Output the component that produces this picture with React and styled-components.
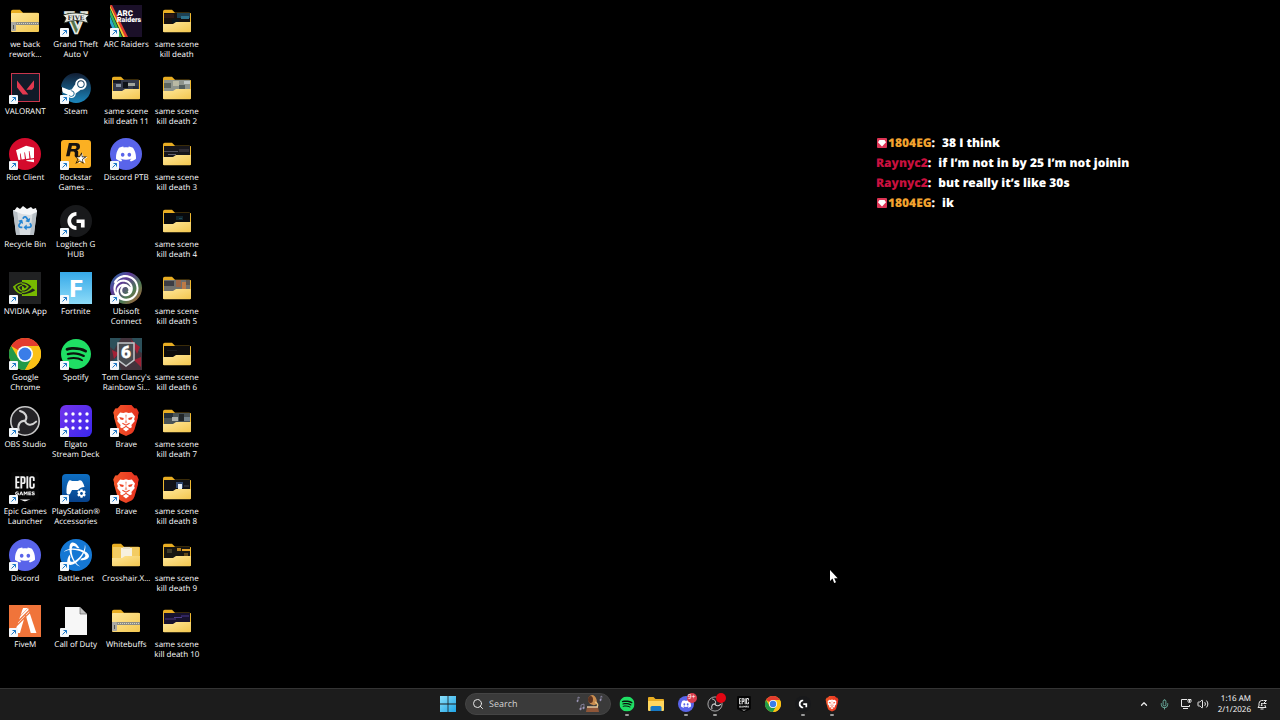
import React from "react";
import styled, { createGlobalStyle } from "styled-components";
import {
  SiValorant, SiSteam, SiRiotgames, SiRockstargames, SiDiscord, SiLogitechg, SiNvidia,
  SiUbisoft, SiSpotify, SiEpicgames, SiBattledotnet, SiFivem,
} from "react-icons/si";
import { FaRecycle, FaCog } from "react-icons/fa";
import { ChevronUp, Mic, Volume2, Search } from "lucide-react";

const GlobalStyle = createGlobalStyle`
  *, *::before, *::after { box-sizing: border-box; }
  body {
    margin: 0;
    background: #000;
    color: #fff;
    font-family: "Open Sans", "Noto Sans", sans-serif;
    text-rendering: geometricPrecision;
  }
  button, input { font: inherit; color: inherit; border: 0; padding: 0; background: none; text-rendering: inherit; }
`;

const Screen = styled.div`
  min-height: 100vh;
  display: flex;
  flex-direction: column;
`;

const Desktop = styled.main`
  position: relative;
  flex: 1;
  display: flex;
  align-items: stretch;
  justify-content: space-between;
  padding-bottom: 21px;
`;

const IconGrid = styled.ul`
  list-style: none;
  margin: 0;
  padding: 0;
  width: 202px;
  display: grid;
  grid-auto-flow: column;
  grid-template-columns: repeat(4, 1fr);
  grid-template-rows: repeat(10, 1fr);
`;

const Cell = styled.li`
  display: flex;
  justify-content: center;
  align-items: flex-start;
  min-width: 0;
`;

const Shortcut = styled.button`
  display: flex;
  flex-direction: column;
  align-items: center;
  gap: 3px;
  padding-top: 5px;
`;

const Glyph = styled.span`
  position: relative;
  display: block;
  width: 32px;
  height: 32px;
  svg { display: block; }
`;

const ArrowBadge = styled.svg`
  position: absolute;
  left: 0;
  bottom: 0;
`;

const Label = styled.span`
  font-size: 8px;
  line-height: 10px;
  text-align: center;
  white-space: pre;
`;

const Chat = styled.section`
  width: 404px;
  padding-top: 133px;
  font-family: "Open Sans", sans-serif;
  font-weight: 800;
  font-size: 12px;
  line-height: 20px;
`;

const Message = styled.p`
  margin: 0;
  display: flex;
  align-items: center;
  white-space: pre;
`;

const Author = styled.span`
  color: ${(p) => p.$color};
`;

const Body = styled.span`
  margin-left: 7px;
`;

const Pointer = styled.svg`
  position: absolute;
  left: 829px;
  top: 570px;
`;

const Taskbar = styled.footer`
  display: grid;
  grid-template-columns: 1fr auto 1fr;
  align-items: center;
  height: 32px;
  background: #1c1c1c;
  box-shadow: inset 0 1px #343434;
`;

const Center = styled.div`
  grid-column: 2;
  display: flex;
  align-items: center;
`;

const SearchBox = styled.label`
  display: flex;
  align-items: center;
  gap: 5px;
  width: 146px;
  height: 22px;
  margin: 0 8px 0 9px;
  padding: 0 6px;
  border-radius: 11px;
  background: #3a3a3a;
  border: 1px solid #444;
`;

const SearchInput = styled.input`
  flex: 1;
  min-width: 0;
  font-size: 9px;
  line-height: 12px;
  outline: none;
  &::placeholder { color: #d4d4d4; opacity: 1; }
`;

const Apps = styled.nav`
  display: flex;
  justify-content: space-between;
  width: 221px;
`;

const AppButton = styled.button`
  position: relative;
  width: 16px;
  height: 24px;
  display: flex;
  align-items: center;
  justify-content: center;
  svg { display: block; flex: none; }
  &::after {
    content: "";
    position: absolute;
    bottom: 0;
    left: 6px;
    width: 4px;
    height: 2px;
    border-radius: 1px;
    background: ${(p) => (p.$running ? "#9a9a9a" : "transparent")};
  }
`;

const Badge = styled.span`
  position: absolute;
  top: 1px;
  right: -3px;
  width: 10px;
  height: 10px;
  border-radius: 5px;
  background: ${(p) => p.$color};
  font-size: 7px;
  line-height: 10px;
  text-align: center;
`;

const Tray = styled.div`
  display: flex;
  align-items: center;
  justify-content: flex-end;
  padding-right: 13px;
`;

const TrayButton = styled.button`
  display: flex;
  margin-right: ${(p) => p.$gap || 0}px;
  color: ${(p) => p.$color || "#e8e8e8"};
`;

const Clock = styled.time`
  font-size: 8px;
  line-height: 11px;
  text-align: right;
  margin-right: 6px;
`;

const Art = ({ size = 32, children }) => (
  <svg width={size} height={size} viewBox="0 0 32 32" aria-hidden="true">{children}</svg>
);

const FOLDER_TAB = "M2 6.500q0-1.800 1.800-1.800H11l3 3h14.400q1.600 0 1.600 1.600V14H2z";

const Folder = ({ thumb, zip, size }) => (
  <Art size={size}>
    <defs>
      <linearGradient id="folderFront" x1="0" y1="0" x2="1" y2="1">
        <stop offset="0" stopColor="#ffe79a" />
        <stop offset="1" stopColor="#f3c74f" />
      </linearGradient>
    </defs>
    <path d={FOLDER_TAB} fill="#e8ad22" />
    <rect x="2" y="8" width="28" height="19" rx="1" fill={zip || !thumb ? "url(#folderFront)" : "#eeb932"} />
    {thumb && (
      <svg x="3" y="8" width="26" height="12" viewBox="0 0 26 12">
        {thumb.map(([x, y, w, h, c], i) => <rect key={i} x={x} y={y} width={w} height={h} fill={c} />)}
      </svg>
    )}
    {!zip && <path d="M2 19h10l3-2h15v9q0 1.200-1.200 1.200H3.200Q2 27.200 2 26z" fill="url(#folderFront)" />}
    {zip && (
      <g>
        <path d="M2 18.500h28" stroke="#8d8d86" strokeWidth="3" />
        <path d="M2 18.500h28" stroke="#d8d4bf" strokeWidth="1" strokeDasharray="1 1" />
        <rect x="2" y="17" width="5" height="9" rx="1" fill="#aaa9a3" />
        <path d="M4.500 20v4" stroke="#55554f" />
      </g>
    )}
  </Art>
);

const Spotify = ({ size }) => (
  <Art size={size}>
    <circle cx="16" cy="16" r="14" fill="#0b130d" />
    <SiSpotify x="1" y="1" size={30} color="#1fdf64" />
  </Art>
);

const Discord = ({ size }) => (
  <Art size={size}>
    <circle cx="16" cy="16" r="16" fill="#5964ea" />
    <SiDiscord x="6" y="6" size={20} color="#fff" />
  </Art>
);

const Chrome = ({ size }) => (
  <Art size={size}>
    <circle cx="16" cy="16" r="16" fill="#fbc116" />
    <path d="M16 16L2.140 8A16 16 0 0 1 29.860 8H16z" fill="#e33b2e" />
    <path d="M2.140 8A16 16 0 0 0 16 32l6.900-12L16 16l-6.900 4z" fill="#229a48" />
    <path d="M16 8h13.860A16 16 0 0 1 16 32l6.900-12z" fill="#fbc116" />
    <circle cx="16" cy="16" r="8" fill="#fff" />
    <circle cx="16" cy="16" r="6.400" fill="#3a7de8" />
  </Art>
);

const Obs = ({ size }) => (
  <Art size={size}>
    <circle cx="16" cy="16" r="14.200" fill="#242326" stroke="#c9c9c9" strokeWidth="1.600" />
    {[0, 120, 240].map((a) => (
      <path
        key={a}
        transform={`rotate(${a} 16 16)`}
        d="M16 16C19 12.500 17 7.500 11 6"
        fill="none"
        stroke="#d4d4d4"
        strokeWidth="2"
        strokeLinecap="round"
      />
    ))}
  </Art>
);

const Epic = ({ size }) => (
  <Art size={size}>
    <rect x="6" y="4" width="20" height="24" fill="#f4f4f4" />
    <path d="M9 27h14l-7 3z" fill="#f4f4f4" />
    <SiEpicgames x="0" y="0" size={32} color="#050505" />
  </Art>
);

const LogitechG = ({ size }) => (
  <Art size={size}>
    <circle cx="16" cy="16" r="16" fill="#18191b" />
    <SiLogitechg x="7" y="7" size={18} color="#fff" />
  </Art>
);

const Brave = ({ size }) => (
  <Art size={size}>
    <defs>
      <linearGradient id="braveShield" x1="0" y1="0" x2="1" y2="0">
        <stop offset="0" stopColor="#f4582a" />
        <stop offset="1" stopColor="#e5301f" />
      </linearGradient>
    </defs>
    <path d="M10.500 0h11l2.800 3.200 2.500.3 2 4-.8 3v2l-3.500 12q-.8 2.500-3 4L16 31l-5.500-2.500q-2.200-1.500-3-4L4 12.500v-2l-.8-3 2-4 2.500-.3z" fill="url(#braveShield)" />
    <g transform="translate(1.600 1.600) scale(.9)">
      <path d="M9.500 6.500l3.500.7 3-1 3 1 3.500-.7 3.500 4.500-1 3 .8 2-3.800 4.500.5 2.500-2 1-2-1-2.500-1.800L13.500 23l-2 1-2-1 .5-2.500L6.200 16l.8-2-1-3z" fill="#fff" />
      <path d="M12.500 25L16 22.800l3.500 2.200-3.500 2.600z" fill="#fff" />
      <path d="M8.500 11.500l5 1.300-.6 2.200-3-.7zM23.500 11.500l-5 1.300.6 2.200 3-.7z" fill="#ee4425" />
      <path d="M15 9h2l-.8 5 1.300 3.500-1.500 1.300-1.500-1.300 1.300-3.500z" fill="#f7a48f" />
      <path d="M12 18.500l4 2.200 4-2.200" fill="none" stroke="#ee4425" strokeWidth="1.200" />
    </g>
  </Art>
);

const Gta = () => (
  <Art>
    <text x="16" y="28" textAnchor="middle" fontFamily="Liberation Serif, serif" fontWeight="700" fontSize="32" fill="#55764b" stroke="#e6e8e2" strokeWidth="1.600">V</text>
    <path d="M3 10l3 3-2 5q12-5 24 0l-2-5 3-3q-13-4-26 0z" fill="#e9ebe5" stroke="#20281d" strokeWidth=".8" />
    <text x="16" y="15" textAnchor="middle" fontFamily="Liberation Serif, serif" fontWeight="700" fontSize="7" fill="#222">FIVE</text>
  </Art>
);

const Arc = () => (
  <Art>
    <rect width="32" height="32" fill="#1b1029" />
    <path d="M0 3l13 29h3L0 0z" fill="#f2d22e" />
    <path d="M0 0h2l16 32h-3z" fill="#e43b32" />
    <path d="M0 4l12 28h-3L0 10z" fill="#30b75c" />
    <path d="M0 11l9 21H6L0 18z" fill="#28a9c9" />
    <g fill="#fff" fontFamily="Roboto, sans-serif" fontWeight="900">
      <text x="7" y="11" fontSize="8">ARC</text>
      <text x="7" y="17" fontSize="7">Raiders</text>
    </g>
  </Art>
);

const Valorant = () => (
  <Art>
    <rect x="2.500" y="1.500" width="28" height="28" fill="#111a28" stroke="#c9364c" />
    <SiValorant x="8" y="7" size={17} color="#e3394f" />
  </Art>
);

const Steam = () => (
  <Art>
    <defs>
      <linearGradient id="steamBlue" x1="0" y1="0" x2="0" y2="1">
        <stop offset="0" stopColor="#111d33" />
        <stop offset="1" stopColor="#1b87bd" />
      </linearGradient>
    </defs>
    <circle cx="16" cy="16" r="14" fill="#fff" />
    <SiSteam x="1" y="1" size={30} fill="url(#steamBlue)" />
  </Art>
);

const Riot = () => (
  <Art>
    <circle cx="16" cy="16" r="16" fill="#d40a2c" />
    <SiRiotgames x="7" y="7" size={18} color="#fff" />
  </Art>
);

const Rockstar = () => (
  <Art>
    <rect x="1" y="2" width="30" height="28" rx="3" fill="#fbb022" />
    <path d="M22 15l1.500 3.800 4 .2-3.200 2.500 1.200 4-3.500-2.300-3.500 2.300 1.200-4-3.200-2.500 4-.2z" fill="#fff" />
    <SiRockstargames x="6" y="5" size={21} color="#151210" />
  </Art>
);

const RecycleBin = () => (
  <Art>
    <path d="M4 5h24l-3 24q0 1-1 1H8q-1 0-1-1z" fill="#d9dee2" />
    <path d="M4 5h4l3 25H8q-1 0-1-1zM24 5h4l-3 24q0 1-1 1h-3z" fill="#b8c0c6" />
    <path d="M5 6l3-4 3 2 3-3 4 3 4-2 2 2 3-1 1 4-7 3-8-1z" fill="#f5f6f7" />
    <FaRecycle x="9" y="11" size={14} color="#2585d3" />
  </Art>
);

const Nvidia = () => (
  <Art>
    <rect width="32" height="32" fill="#202122" />
    <SiNvidia x="4" y="4" size={24} color="#77b900" />
  </Art>
);

const Fortnite = () => (
  <Art>
    <defs>
      <linearGradient id="fortniteSky" x1="0" y1="0" x2="0" y2="1">
        <stop offset="0" stopColor="#35a8e8" />
        <stop offset="1" stopColor="#8edcf8" />
      </linearGradient>
    </defs>
    <rect width="32" height="32" fill="url(#fortniteSky)" />
    <text x="16" y="25" textAnchor="middle" fontFamily="Roboto, sans-serif" fontWeight="900" fontSize="24" fill="#fff">F</text>
  </Art>
);

const Ubisoft = () => (
  <Art>
    <defs>
      <linearGradient id="ubiRing" x1="0" y1="0" x2="1" y2="1">
        <stop offset="0" stopColor="#2378a8" />
        <stop offset=".35" stopColor="#5e3a96" />
        <stop offset=".65" stopColor="#4d7b54" />
        <stop offset="1" stopColor="#c45a34" />
      </linearGradient>
    </defs>
    <circle cx="16" cy="16" r="16" fill="url(#ubiRing)" />
    <SiUbisoft x="3" y="3" size={26} color="#fff" />
  </Art>
);

const Rainbow = () => (
  <Art>
    <rect width="32" height="32" fill="#43333c" />
    <path d="M0 0h11L4 12 0 9zM22 0h10v15l-7-4zM0 24l7-5 4 13H3z" fill="#2c505a" />
    <path d="M21 2l9 7-3 7zM2 12l7 3-5 6zM24 22l7-3v10z" fill="#a32236" />
    <path d="M8 5h16v17l-8 6-8-6z" fill="#484b50" stroke="#c2c6c9" strokeWidth="1.500" />
    <text x="16" y="20" textAnchor="middle" fontFamily="Roboto, sans-serif" fontWeight="900" fontSize="17" fill="#fff" stroke="#fff" strokeWidth=".4">6</text>
  </Art>
);

const StreamDeck = () => (
  <Art>
    <defs>
      <linearGradient id="deck" x1="0" y1="0" x2="1" y2="1">
        <stop offset="0" stopColor="#7434ec" />
        <stop offset="1" stopColor="#3a28ee" />
      </linearGradient>
    </defs>
    <rect width="32" height="32" rx="6" fill="url(#deck)" />
    {[9, 16, 23].map((y) => [6, 13, 20, 27].map((x) => <circle key={`${x}-${y}`} cx={x} cy={y} r="1.700" fill="#fff" />))}
  </Art>
);

const PlayStation = () => (
  <Art>
    <defs>
      <linearGradient id="psBlue" x1="0" y1="0" x2="0" y2="1">
        <stop offset="0" stopColor="#0e6fc3" />
        <stop offset="1" stopColor="#06418a" />
      </linearGradient>
    </defs>
    <rect x="2" y="2" width="28" height="28" rx="4" fill="url(#psBlue)" />
    <path d="M9 8.500q1.500-.8 3 .5h6q1.500-1.300 3-.5 2 1 3.500 6.500-4 0-6.500 3h-6l-2 4q-2.500 1.500-3.500-1Q6 13 9 8.500z" fill="#fff" />
    <FaCog x="17" y="17" size={9} color="#fff" />
  </Art>
);

const BattleNet = () => (
  <Art>
    <circle cx="16" cy="16" r="16" fill="#1578d4" />
    <SiBattledotnet x="4" y="3" size={25} color="#fff" />
  </Art>
);

const FiveM = () => (
  <Art>
    <rect width="32" height="32" fill="#f0743a" />
    <SiFivem x="4" y="3" size={25} color="#fff" />
  </Art>
);

const BlankFile = () => (
  <Art>
    <path d="M5 2h15l7 7v21H5z" fill="#f7f7f7" />
    <path d="M20 2v7h7z" fill="#c4c4c4" stroke="#555" strokeWidth=".6" />
  </Art>
);

const folder = (thumb) => () => <Folder thumb={thumb} />;
const Zip = () => <Folder zip />;

const base = (c) => [0, 0, 26, 12, c];

const ITEMS = [
  { label: "we back\nrework...", art: Zip },
  { label: "VALORANT", art: Valorant, link: true },
  { label: "Riot Client", art: Riot, link: true },
  { label: "Recycle Bin", art: RecycleBin },
  { label: "NVIDIA App", art: Nvidia, link: true },
  { label: "Google\nChrome", art: Chrome, link: true },
  { label: "OBS Studio", art: Obs, link: true },
  { label: "Epic Games\nLauncher", art: Epic, link: true },
  { label: "Discord", art: Discord, link: true },
  { label: "FiveM", art: FiveM, link: true },
  { label: "Grand Theft\nAuto V", art: Gta, link: true },
  { label: "Steam", art: Steam, link: true },
  { label: "Rockstar\nGames ...", art: Rockstar, link: true },
  { label: "Logitech G\nHUB", art: LogitechG, link: true },
  { label: "Fortnite", art: Fortnite, link: true },
  { label: "Spotify", art: Spotify, link: true },
  { label: "Elgato\nStream Deck", art: StreamDeck, link: true },
  { label: "PlayStation®\nAccessories", art: PlayStation, link: true },
  { label: "Battle.net", art: BattleNet, link: true },
  { label: "Call of Duty", art: BlankFile, link: true },
  { label: "ARC Raiders", art: Arc, link: true },
  { label: "same scene\nkill death 11", art: folder([base("#34394a"), [0, 0, 8, 3, "#151821"], [3, 4, 5, 3, "#8b96a1"], [10, 2, 5, 6, "#0f1218"], [15, 3, 7, 3, "#a0a49c"], [20, 6, 5, 3, "#232b39"]]) },
  { label: "Discord PTB", art: Discord, link: true },
  null,
  { label: "Ubisoft\nConnect", art: Ubisoft, link: true },
  { label: "Tom Clancy's\nRainbow Si...", art: Rainbow, link: true },
  { label: "Brave", art: Brave, link: true },
  { label: "Brave", art: Brave, link: true },
  { label: "Crosshair.X...", art: folder([base("#f3cc62"), [8, 1, 11, 11, "#f7f1df"], [10, 0, 7, 2, "#e7dfc8"]]) },
  { label: "Whitebuffs", art: Zip },
  { label: "same scene\nkill death", art: folder([base("#15100f"), [0, 1, 10, 4, "#2b1715"], [13, 0, 13, 5, "#1d4154"], [17, 3, 8, 3, "#2e728c"], [8, 6, 7, 4, "#07141c"]]) },
  { label: "same scene\nkill death 2", art: folder([base("#8f958d"), [0, 3, 7, 5, "#5d6660"], [9, 1, 6, 5, "#b9b9a4"], [15, 5, 6, 4, "#545f5e"], [20, 1, 6, 3, "#c0c7c5"]]) },
  { label: "same scene\nkill death 3", art: folder([base("#16151a"), [0, 5, 14, 1, "#51505c"], [15, 3, 10, 3, "#2f2c33"], [4, 8, 8, 1, "#666370"]]) },
  { label: "same scene\nkill death 4", art: folder([base("#07090c"), [12, 3, 7, 4, "#10252d"], [15, 5, 3, 1, "#214b58"]]) },
  { label: "same scene\nkill death 5", art: folder([base("#70706c"), [0, 1, 10, 5, "#3b3c43"], [12, 0, 5, 7, "#9b6443"], [18, 2, 4, 7, "#bd7a46"], [22, 0, 4, 5, "#5d554f"]]) },
  { label: "same scene\nkill death 6", art: folder([base("#0c0b0b"), [3, 4, 10, 1, "#17191b"]]) },
  { label: "same scene\nkill death 7", art: folder([base("#4a5457"), [0, 0, 9, 5, "#253039"], [8, 4, 6, 4, "#a9aeac"], [15, 1, 5, 7, "#202629"], [20, 4, 6, 4, "#73828a"]]) },
  { label: "same scene\nkill death 8", art: folder([base("#111216"), [12, 2, 7, 6, "#334a70"], [14, 4, 4, 5, "#e6edf4"], [20, 5, 5, 2, "#29292f"]]) },
  { label: "same scene\nkill death 9", art: folder([base("#171511"), [3, 2, 5, 4, "#3d3928"], [13, 1, 4, 3, "#b68220"], [18, 2, 8, 2, "#e2a126"], [20, 6, 4, 3, "#604718"]]) },
  { label: "same scene\nkill death 10", art: folder([base("#17122e"), [1, 5, 11, 2, "#302456"], [10, 4, 8, 1, "#50408b"], [17, 2, 8, 2, "#30245d"]]) },
];

const MESSAGES = [
  { author: "1804EG", color: "#f2a32f", gem: true, text: "38 I think" },
  { author: "Raynyc2", color: "#c9103f", text: "if I’m not in by 25 I’m not joinin" },
  { author: "Raynyc2", color: "#c9103f", text: "but really it’s like 30s" },
  { author: "1804EG", color: "#f2a32f", gem: true, text: "ik" },
];

const TASK_APPS = [
  { name: "Spotify", art: Spotify, running: true },
  { name: "File Explorer", art: Explorer },
  { name: "Discord", art: Discord, running: true, badge: "9+", badgeColor: "#d83c4e" },
  { name: "OBS Studio", art: Obs, running: true, badge: "", badgeColor: "#e30613" },
  { name: "Epic Games", art: Epic },
  { name: "Google Chrome", art: Chrome },
  { name: "Logitech G HUB", art: LogitechG, running: true },
  { name: "Brave", art: Brave, running: true },
];

function Explorer({ size }) {
  return (
    <Art size={size}>
      <path d="M0 4q0-2 2-2h9l4 4h15q2 0 2 2v20H0z" fill="#e8ad22" />
      <path d="M0 10h32v18q0 2-2 2H2q-2 0-2-2z" fill="#ffd75e" />
      <path d="M5 30v-7q0-3 3-3h16q3 0 3 3v7z" fill="#1679c4" />
    </Art>
  );
}

const Gramophone = () => (
  <svg width="28" height="20" viewBox="0 0 28 20" aria-hidden="true">
    <g stroke="#a9a2c8" fill="#a9a2c8" strokeWidth=".6">
      <path d="M2 7V3l2 1" fill="none" /><circle cx="1.500" cy="7" r=".7" />
      <path d="M5 15v-4l3-1v4" fill="none" /><circle cx="4.500" cy="15" r=".8" /><circle cx="7.500" cy="14" r=".8" />
      <path d="M25 6V2l1.500 1" fill="none" /><circle cx="24.500" cy="6" r=".7" />
    </g>
    <path d="M12 5q1-4 5-4 4 2 4 8-2 3-4 2-5-1-5-6z" fill="#c98c4e" />
    <ellipse cx="14.500" cy="5.500" rx="2.500" ry="3.500" fill="#5d3320" />
    <path d="M19 8q4 2 2 5" fill="none" stroke="#e4bd7c" strokeWidth="1.500" />
    <path d="M11 13h11l1 5H10z" fill="#8f5638" />
    <path d="M11 13h11" stroke="#e0c7a0" strokeWidth="1.500" />
  </svg>
);

export default function App() {
  return (
    <>
      <GlobalStyle />
      <Screen>
        <Desktop>
          <IconGrid>
            {ITEMS.map((item, i) => (
              <Cell key={i}>
                {item && (
                  <Shortcut type="button">
                    <Glyph>
                      <item.art />
                      {item.link && (
                        <ArrowBadge width="9" height="9" viewBox="0 0 9 9" aria-hidden="true">
                          <rect width="9" height="9" rx="1" fill="#f4f8fb" />
                          <path d="M2.500 6.500l4-4M3.500 2.500h3v3" fill="none" stroke="#1a78c8" />
                        </ArrowBadge>
                      )}
                    </Glyph>
                    <Label>{item.label}</Label>
                  </Shortcut>
                )}
              </Cell>
            ))}
          </IconGrid>
          <Chat aria-label="Chat">
            {MESSAGES.map((m, i) => (
              <Message key={i}>
                {m.gem && (
                  <svg width="12" height="10" viewBox="0 0 12 10" aria-hidden="true">
                    <rect x="1" width="10" height="10" rx="1" fill="#dc3555" />
                    <path d="M3.500 2h5L10 4.200 6 8.500 2 4.200z" fill="#fff" />
                  </svg>
                )}
                <Author $color={m.color}>{m.author}</Author>:
                <Body>{m.text}</Body>
              </Message>
            ))}
          </Chat>
          <Pointer width="9" height="14" viewBox="0 0 9 14" aria-hidden="true">
            <path d="M1 0v11l2.500-2.400L5.200 13l1.800-.8-1.800-4h3.500z" fill="#fff" />
          </Pointer>
        </Desktop>
        <Taskbar>
          <Center>
            <AppButton type="button" aria-label="Start">
              <svg width="16" height="16" viewBox="0 0 16 16">
                <defs>
                  <linearGradient id="startBlue" x1="0" y1="0" x2="1" y2="1">
                    <stop offset="0" stopColor="#8be0fb" />
                    <stop offset="1" stopColor="#1fa5e6" />
                  </linearGradient>
                </defs>
                <path d="M0 0h7.600v7.600H0zM8.400 0H16v7.600H8.400zM0 8.400h7.600V16H0zM8.400 8.400H16V16H8.400z" fill="url(#startBlue)" />
              </svg>
            </AppButton>
            <SearchBox>
              <Search size={12} color="#e6e6e6" aria-hidden="true" />
              <SearchInput type="text" placeholder="Search" aria-label="Search" />
              <Gramophone />
            </SearchBox>
            <Apps aria-label="Taskbar apps">
              {TASK_APPS.map((a) => (
                <AppButton key={a.name} type="button" aria-label={a.name} $running={a.running}>
                  <a.art size={16} />
                  {a.badge !== undefined && <Badge $color={a.badgeColor}>{a.badge}</Badge>}
                </AppButton>
              ))}
            </Apps>
          </Center>
          <Tray>
            <TrayButton type="button" aria-label="Show hidden icons" $gap={10}><ChevronUp size={10} strokeWidth={3} /></TrayButton>
            <TrayButton type="button" aria-label="Microphone" $gap={10} $color="#6fb5a5"><Mic size={11} /></TrayButton>
            <TrayButton type="button" aria-label="Network" $gap={5}>
              <svg width="12" height="12" viewBox="0 0 12 12" fill="none" stroke="currentColor">
                <path d="M7 1.500H1.500v7h8V7M3 10.500h5M9.500 1v3M8 1.500v2q0 1 1.500 1t1.500-1v-2z" />
              </svg>
            </TrayButton>
            <TrayButton type="button" aria-label="Volume" $gap={9}><Volume2 size={12} /></TrayButton>
            <Clock dateTime="2026-02-01T01:16">1:16 AM<br />2/1/2026</Clock>
            <TrayButton type="button" aria-label="Notifications">
              <svg width="10" height="11" viewBox="0 0 10 11" fill="none" stroke="currentColor">
                <path d="M6 1.500H4.500Q2 2 2 4.500V7L1 8.500h8L8 7V6M3.500 10h3M6.500 1.500h3l-3 3h3M4 4.500h1.500L4 6.500h1.500" />
              </svg>
            </TrayButton>
          </Tray>
        </Taskbar>
      </Screen>
    </>
  );
}
